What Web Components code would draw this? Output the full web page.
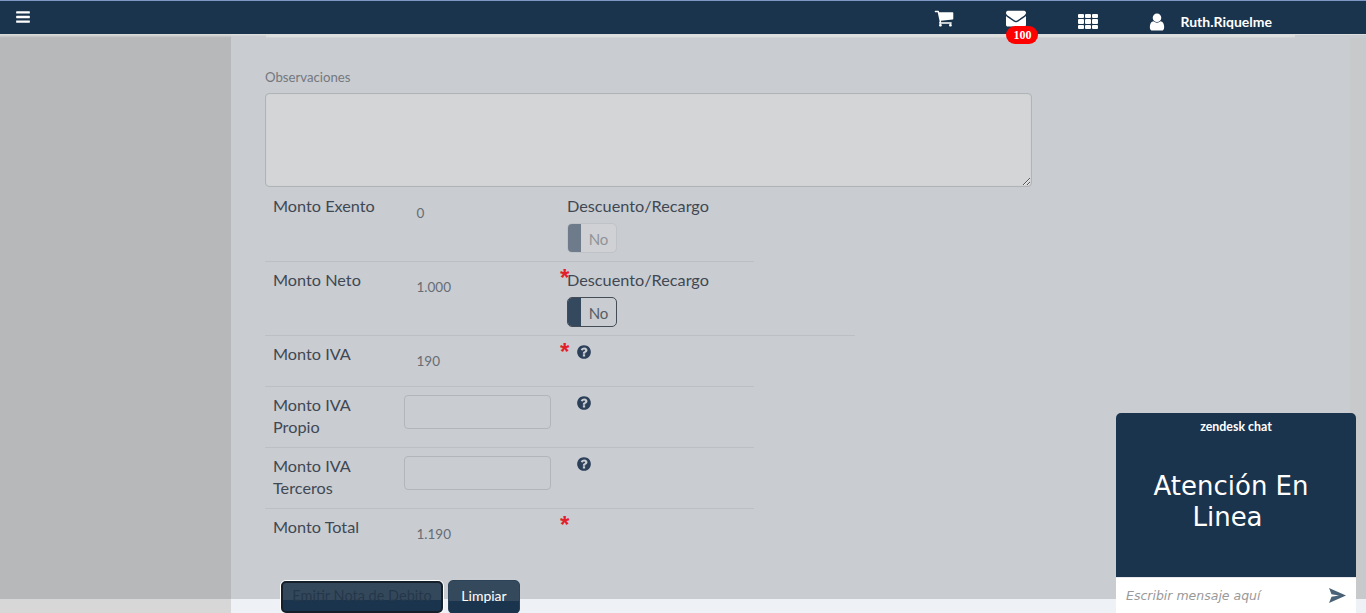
<!DOCTYPE html>
<html lang="es">
<head>
<meta charset="utf-8">
<title>Nota de Debito</title>
<style>
    html, body { margin: 0; height: 100%; overflow: hidden; }
    body { font-family: Lato, "Liberation Sans", sans-serif; }
</style>
</head>
<body>
<app-shell>
    <top-bar slot="top" user="Ruth.Riquelme" count="100"></top-bar>
    <debit-form></debit-form>
</app-shell>
<chat-widget></chat-widget>

<script>
const ICONS = {
    bars: 'M1664 1344v128q0 26-19 45t-45 19h-1408q-26 0-45-19t-19-45v-128q0-26 19-45t45-19h1408q26 0 45 19t19 45zm0-512v128q0 26-19 45t-45 19h-1408q-26 0-45-19t-19-45v-128q0-26 19-45t45-19h1408q26 0 45 19t19 45zm0-512v128q0 26-19 45t-45 19h-1408q-26 0-45-19t-19-45v-128q0-26 19-45t45-19h1408q26 0 45 19t19 45z',
    cart: 'M704 1536q0 52-38 90t-90 38-90-38-38-90 38-90 90-38 90 38 38 90zm896 0q0 52-38 90t-90 38-90-38-38-90 38-90 90-38 90 38 38 90zm128-1088v512q0 24-16.500 42.500t-40.500 21.500l-1044 122q13 60 13 70 0 16-24 64h920q26 0 45 19t19 45-19 45-45 19h-1024q-26 0-45-19t-19-45q0-11 8-31.500t16-36 21.500-40 15.500-29.500l-177-823h-204q-26 0-45-19t-19-45 19-45 45-19h256q16 0 28.500 6.500t19.500 15.500 13 24.500 8 26 5.500 29.500 4.500 26h1201q26 0 45 19t19 45z',
    envelope: 'M1792 710v794q0 66-47 113t-113 47h-1472q-66 0-113-47t-47-113v-794q44 49 101 87 362 246 497 345 57 42 92.500 65.500t94.500 48 110 24.500h2q51 0 110-24.500t94.500-48 92.500-65.500q170-123 498-345 57-39 100-87zm0-294q0 79-49 151t-122 123q-376 261-468 325-10 7-42.500 30.500t-54 38-52 32.500-57.500 27-50 9h-2q-23 0-50-9t-57.500-27-52-32.500-54-38-42.500-30.500q-91-64-262-182.500t-205-142.500q-62-42-117-115.500t-55-136.500q0-78 41.500-130t118.500-52h1472q65 0 112.500 47t47.500 113z',
    user: 'M1536 1399q0 109-62.500 187t-150.500 78h-854q-88 0-150.500-78t-62.500-187q0-85 8.500-160.500t31.500-152 58.500-131 94-89 134.500-34.500q131 128 313 128t313-128q76 0 134.500 34.500t94 89 58.500 131 31.500 152 8.500 160.500zm-256-887q0 159-112.500 271.500t-271.500 112.500-271.500-112.500-112.500-271.500 112.500-271.500 271.500-112.500 271.500 112.500 112.500 271.500z',
    help: 'M1024 1376v-192q0-14-9-23t-23-9h-192q-14 0-23 9t-9 23v192q0 14 9 23t23 9h192q14 0 23-9t9-23zm256-672q0-88-55.500-163t-138.500-116-170-41q-243 0-371 213-15 24 8 42l132 100q7 6 19 6 16 0 25-12 53-68 86-92 34-24 86-24 48 0 85.500 26t37.500 59q0 38-20 61t-68 45q-63 28-115.500 86.500t-52.500 125.500v36q0 14 9 23t23 9h192q14 0 23-9t9-23q0-19 21.500-49.500t54.500-49.500q32-18 49-28.500t46-35 44.500-48 28-60.500 12.500-81zm384 192q0 209-103 385.500t-279.500 279.500-385.500 103-385.500-103-279.500-279.500-103-385.500 103-385.500 279.500-279.500 385.500-103 385.500 103 279.500 279.500 103 385.500z'
};

function icon(name, size) {
    return `<svg width="${size}" height="${size}" viewBox="0 0 1792 1792" fill="currentColor"><path d="${ICONS[name]}"></path></svg>`;
}

// page frame: top bar, strip, sidebar + content, bottom band
class AppShell extends HTMLElement {
    constructor() {
        super();
        this.attachShadow({ mode: 'open' });
        this.shadowRoot.innerHTML = `
            <style>
                :host { display: flex; flex-direction: column; height: 613px; background: #c9ccd1; }
                .strip { height: 4px; display: flex; background: linear-gradient(#dcdddd 1px, #c9ccd1 1px); }
                .strip .a { width: 231px; background: linear-gradient(#dedede, #b7b8b9); }
                .strip .b { width: 35px; background: linear-gradient(#dcdddd 1px, #c9ccd1 2px); }
                .strip .c { width: 1029px; background: #dcdddd; border-bottom: 1px solid #d0d2d4; box-sizing: border-box; }
                .middle { flex: 1; min-height: 0; display: flex; }
                .side { width: 231px; background: #b7b8b9; box-shadow: 1px 0 2px rgba(0,0,0,.06); }
                .main { flex: 1; min-width: 0; background: #c9ccd1; position: relative; }
                .edge { width: 16px; background: #c7c9cb; }
                .band { height: 14px; display: flex; background: #eef1f6; }
                .band i { width: 231px; background: #d7d7d7; }
            </style>
            <slot name="top"></slot>
            <div class="strip"><i class="a"></i><i class="b"></i><i class="c"></i></div>
            <div class="middle">
                <div class="side"></div>
                <div class="main"><slot></slot></div>
                <div class="edge"></div>
            </div>
            <div class="band"><i></i></div>
        `;
    }
}

class TopBar extends HTMLElement {
    constructor() {
        super();
        this.attachShadow({ mode: 'open' });
    }

    connectedCallback() {
        this.shadowRoot.innerHTML = `
            <style>
                :host {
                    display: flex;
                    align-items: center;
                    height: 33px;
                    background: #1a344d;
                    border-top: 1px solid #7e97c4;
                    color: #fff;
                    font-family: Lato, "Liberation Sans", sans-serif;
                    position: relative;
                    z-index: 2;
                }
                .burger { margin-left: 15px; display: flex; margin-top: -2px; }
                .tools { margin-left: auto; display: flex; align-items: center; margin-right: 94px; }
                .tool { display: flex; position: relative; }
                .cart { margin-right: 52px; margin-top: 1px; }
                .mail { margin-right: 52px; margin-top: 1px; }
                .grid { margin-right: 49px; margin-top: 8px; width: 20px; height: 15px; display: grid; grid-template: repeat(3, 1fr) / repeat(3, 1fr); gap: 1px; }
                .grid i { background: #fff; border-radius: 1px; }
                .count {
                    position: absolute;
                    left: 0;
                    top: 18px;
                    background: #f00;
                    color: #fff;
                    font: bold 12px "Liberation Serif", serif;
                    line-height: 18px;
                    height: 18px;
                    width: 32px;
                    text-align: center;
                    border-radius: 9px;
                }
                .user { margin-right: 13px; margin-top: 9px; }
                .name { font-size: 14px; font-weight: 700; margin-top: 8px; }
            </style>
            <span class="burger">${icon('bars', 16)}</span>
            <div class="tools">
                <span class="tool cart">${icon('cart', 20)}</span>
                <span class="tool mail">${icon('envelope', 20)}<span class="count">${this.getAttribute('count')}</span></span>
                <span class="tool grid"><i></i><i></i><i></i><i></i><i></i><i></i><i></i><i></i><i></i></span>
                <span class="tool user">${icon('user', 20)}</span>
                <span class="name">${this.getAttribute('user')}</span>
            </div>
        `;
    }
}

// one line of the amounts table: label, value or input, right hand cell
class FormRow extends HTMLElement {
    constructor() {
        super();
        this.attachShadow({ mode: 'open' });
        this.shadowRoot.innerHTML = `
            <style>
                :host {
                    display: grid;
                    grid-template-columns: 139px 155px 1fr;
                    width: 489px;
                    box-sizing: border-box;
                    border-bottom: 1px solid #bcc0c5;
                    color: #3f4853;
                    font-size: 16.250px;
                    line-height: 22px;
                }
                :host([wide]) { width: 590px; }
                .label { padding: 7px 12px 0 8px; }
                .value { color: #666c74; font-size: 13.500px; padding: 14px 0 0 12.500px; }
                .aside { position: relative; padding-top: 7px; }
            </style>
            <div class="label"><slot name="label"></slot></div>
            <div class="value"><slot name="value"></slot></div>
            <div class="aside"><slot></slot></div>
        `;
    }
}

class SwitchNo extends HTMLElement {
    constructor() {
        super();
        this.attachShadow({ mode: 'open' });
        this.shadowRoot.innerHTML = `
            <style>
                :host {
                    display: flex;
                    width: 50px;
                    height: 30px;
                    box-sizing: border-box;
                    border: 1px solid #444c55;
                    border-radius: 5px;
                    overflow: hidden;
                    color: #555c64;
                    font-size: 15px;
                    line-height: 30px;
                    margin: 6px 0 0 8px;
                }
                :host([disabled]) { border-color: #bfc2c6; color: #8f9398; background: #cfd1d4; }
                :host([disabled]) .knob { background: #6d7b8a; }
                .knob { width: 13px; background: #34495e; }
                .txt { flex: 1; text-align: center; }
            </style>
            <span class="knob"></span><span class="txt">No</span>
        `;
    }
}

class AmountInput extends HTMLElement {
    constructor() {
        super();
        this.attachShadow({ mode: 'open' });
        this.shadowRoot.innerHTML = `
            <style>
                :host { display: block; margin: -6px 0 0 -12.500px; width: 147px; height: 34px; }
                input {
                    display: block;
                    width: 100%;
                    height: 100%;
                    box-sizing: border-box;
                    background: transparent;
                    border: 1px solid #b2b5b9;
                    border-radius: 4px;
                    padding: 0 8px;
                    outline: 0;
                }
            </style>
            <input type="text">
        `;
    }
}

class HelpMark extends HTMLElement {
    constructor() {
        super();
        this.attachShadow({ mode: 'open' });
        this.shadowRoot.innerHTML = `
            <style>
                :host { display: flex; margin: 1px 0 0 17px; color: #2c405a; height: 16px; }
            </style>
            ${icon('help', 16)}
        `;
    }
}

class ReqStar extends HTMLElement {
    constructor() {
        super();
        this.attachShadow({ mode: 'open' });
        this.shadowRoot.innerHTML = `
            <style>
                :host {
                    position: absolute;
                    left: 1px;
                    top: 4px;
                    color: #e2202a;
                    font: bold 24px/24px "Liberation Sans", sans-serif;
                }
            </style>*
        `;
    }
}

class DebitForm extends HTMLElement {
    constructor() {
        super();
        this.attachShadow({ mode: 'open' });
        this.shadowRoot.innerHTML = `
            <style>
                :host {
                    display: block;
                    padding: 29px 0 0 34px;
                    font-family: Lato, "Liberation Sans", sans-serif;
                }
                .obs-label { font-size: 13.200px; line-height: 20px; color: #74787e; margin-bottom: 6px; }
                textarea {
                    display: block;
                    width: 767px;
                    height: 94px;
                    margin: 0 0 1px;
                    box-sizing: border-box;
                    background: #d4d5d7;
                    border: 1px solid #b0b3b7;
                    border-radius: 4px;
                    box-shadow: inset 0 0 1px #b0b3b7;
                    outline: 0;
                }
                .desc { padding-left: 8px; }
                .actions { display: flex; align-items: flex-start; gap: 4px; margin: 11px 0 0 15px; }
                button {
                    height: 34px;
                    border-radius: 5px;
                    font: 14px Lato, "Liberation Sans", sans-serif;
                    box-sizing: border-box;
                    padding: 0 0 4px;
                    background: linear-gradient(#35495c 20px, #1a344d 20px);
                }
                .emit {
                    width: 162px;
                    margin: 1px 1px 0 1px;
                    height: 32px;
                    font-size: 14.500px;
                    color: #243749;
                    border: 2px solid #16202a;
                    box-shadow: 0 0 0 1px #fff;
                    white-space: nowrap;
                    overflow: hidden;
                    background: linear-gradient(#34485c 17px, #1a344d 17px);
                }
                .clear { width: 72px; color: #fff; border: 1px solid #2b4257; }
            </style>
            <div class="obs-label">Observaciones</div>
            <textarea></textarea>
            <form-row style="height:74px">
                <span slot="label">Monto Exento</span>
                <span slot="value">0</span>
                <div class="desc">Descuento/Recargo</div>
                <switch-no disabled></switch-no>
            </form-row>
            <form-row wide style="height:74px">
                <span slot="label">Monto Neto</span>
                <span slot="value">1.000</span>
                <req-star></req-star>
                <div class="desc">Descuento/Recargo</div>
                <switch-no></switch-no>
            </form-row>
            <form-row style="height:51px">
                <span slot="label">Monto IVA</span>
                <span slot="value">190</span>
                <req-star></req-star>
                <help-mark></help-mark>
            </form-row>
            <form-row style="height:61px">
                <span slot="label">Monto IVA Propio</span>
                <amount-input slot="value"></amount-input>
                <help-mark></help-mark>
            </form-row>
            <form-row style="height:61px">
                <span slot="label">Monto IVA Terceros</span>
                <amount-input slot="value"></amount-input>
                <help-mark></help-mark>
            </form-row>
            <form-row style="height:60px; border:0">
                <span slot="label">Monto Total</span>
                <span slot="value">1.190</span>
                <req-star></req-star>
            </form-row>
            <div class="actions">
                <button class="emit">Emitir Nota de Debito</button>
                <button class="clear">Limpiar</button>
            </div>
        `;
    }
}

class ChatWidget extends HTMLElement {
    constructor() {
        super();
        this.attachShadow({ mode: 'open' });
        this.shadowRoot.innerHTML = `
            <style>
                :host {
                    position: fixed;
                    right: 10px;
                    bottom: 0;
                    width: 240px;
                    height: 200px;
                    display: flex;
                    flex-direction: column;
                    border-radius: 5px 5px 0 0;
                    overflow: hidden;
                    z-index: 5;
                    font-family: "DejaVu Sans", sans-serif;
                }
                .head {
                    flex: 1;
                    background: #1a344d;
                    color: #fff;
                    text-align: center;
                    border-bottom: 1px solid #e6e8eb;
                }
                .brand { font: bold 12.400px/14px Lato, sans-serif; margin-top: 7px; }
                .title { font-size: 26px; line-height: 31px; margin: 37px 25px 0 15px; }
                .title span { display: block; }
                .title .second { padding-right: 7px; }
                .input {
                    height: 35px;
                    background: #fff;
                    display: flex;
                    align-items: center;
                    justify-content: space-between;
                    padding: 0 10px;
                    color: #999;
                    font-style: italic;
                    font-size: 12.500px;
                }
                svg { display: block; }
            </style>
            <div class="head">
                <div class="brand">zendesk chat</div>
                <div class="title"><span>Atención En</span><span class="second">Linea</span></div>
            </div>
            <div class="input">
                <span>Escribir mensaje aquí</span>
                <svg width="17" height="15" viewBox="0 0 17 15" fill="#4a6278"><path d="M0 0 L17 7.500 L0 15 L2.500 8.800 L10 7.500 L2.500 6.200 Z"></path></svg>
            </div>
        `;
    }
}

customElements.define('app-shell', AppShell);
customElements.define('top-bar', TopBar);
customElements.define('form-row', FormRow);
customElements.define('switch-no', SwitchNo);
customElements.define('amount-input', AmountInput);
customElements.define('help-mark', HelpMark);
customElements.define('req-star', ReqStar);
customElements.define('debit-form', DebitForm);
customElements.define('chat-widget', ChatWidget);
</script>
</body>
</html>
